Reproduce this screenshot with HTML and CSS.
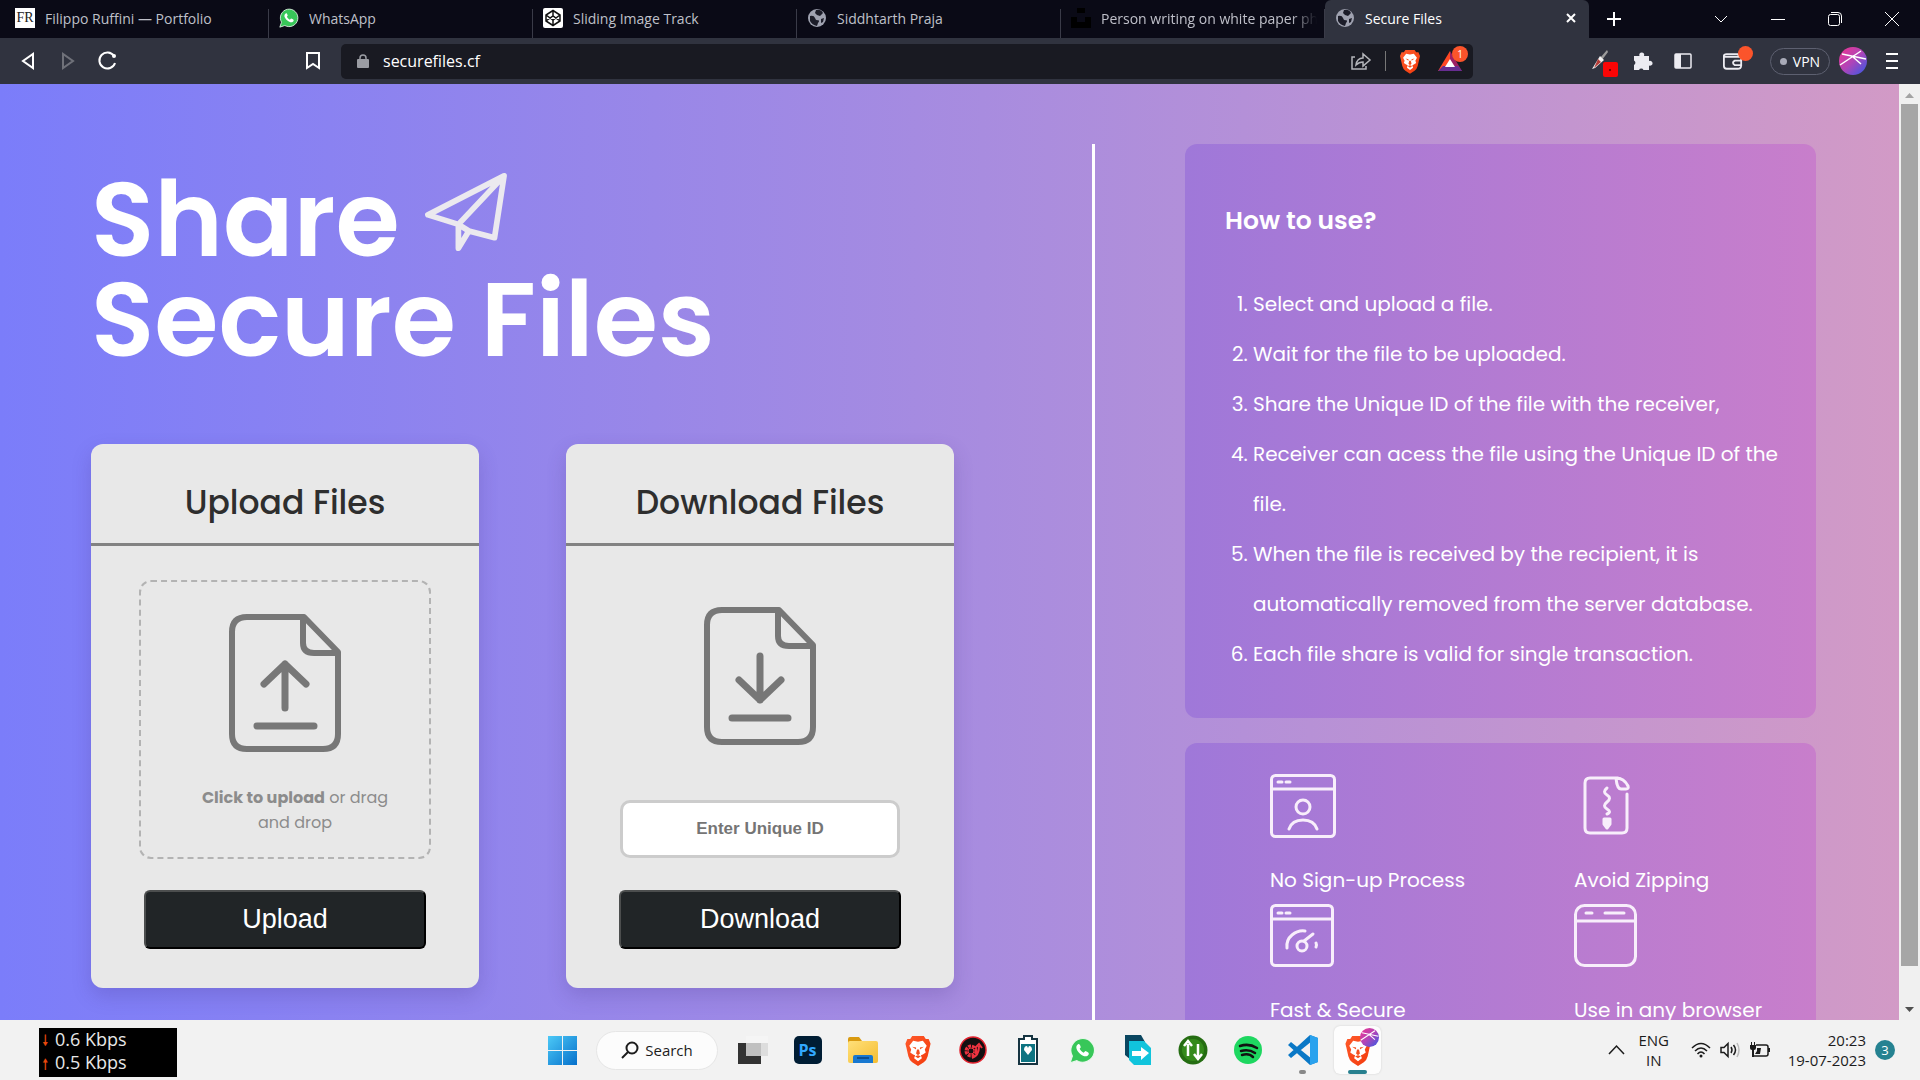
FILE: index.html
```html
<!DOCTYPE html>
<html lang="en">
<head>
<meta charset="utf-8">
<title>Secure Files</title>
<link rel="stylesheet" href="styles.css">
</head>
<body>
<svg class="defs" width="0" height="0" aria-hidden="true">
  <defs>
    <linearGradient id="orange" x1="0" y1="0" x2="1" y2="1"><stop offset="0" stop-color="#ff5a2b"/><stop offset="1" stop-color="#f23a0c"/></linearGradient>
    <linearGradient id="win" x1="0" y1="0" x2="1" y2="1"><stop offset="0" stop-color="#4cc9f7"/><stop offset="1" stop-color="#0670cb"/></linearGradient>
    <linearGradient id="fold" x1="0" y1="0" x2="1" y2="1"><stop offset="0" stop-color="#ffe07a"/><stop offset="1" stop-color="#f5bd31"/></linearGradient>
    <linearGradient id="orb" x1="0" y1="0" x2="1" y2="1"><stop offset="0" stop-color="#f0358e"/><stop offset=".5" stop-color="#b044b8"/><stop offset="1" stop-color="#2f5be8"/></linearGradient>
    <symbol id="globe" viewBox="0 0 20 20"><circle cx="10" cy="10" r="9" fill="#9fa2b0"/><path d="M3 8q4-1 5 2t3 2q2 1 0 3l-1 3q-5-1-7-5zM9 2q5-1 7 3l-3 3-3-1-2-2zM14 11l3-1-1 4-2 1z" fill="#1c1d29"/></symbol>
    <symbol id="lion" viewBox="0 0 26 32"><path d="M7 1h12l2 3 3 0 2 5-1 4-2 9q-1 4-4 6l-6 4-6-4q-3-2-4-6L1 13 0 9l2-5 3 0z" fill="url(#orange)"/><path d="M8 6l5 1 5-1 4 5-2 4 1 3-3 2-2 1 1 3-4 3-4-3 1-3-2-1-3-2 1-3-2-4z" fill="#fff"/><path d="M7 12l4 1 0 2zM19 12l-4 1 0 2zM12 15h2l1 4-2 2-2-2zM10 22l3-1 3 1-3 2z" fill="#f4501f"/></symbol>
    <symbol id="whats" viewBox="0 0 24 24"><path d="M1 23l2-6a10.500 10.500 0 1 1 4 4z" fill="#38c759" stroke="#e9f7ec" stroke-width="1"/><path d="M8 6.500c-3 2-1 6 2 8.500s6 3 7.500.5c.5-1.500-.5-2-3-3l-1.500 1.500c-2-1-3-2.500-3.500-3.500l1-1.500C9.500 6 9 6 8 6.500z" fill="#fff"/></symbol>
    <symbol id="ball" viewBox="0 0 28 28"><circle cx="14" cy="14" r="14" fill="url(#orb)"/><path d="M1 18L22 4M3 7l24 5M14 10l8 7" stroke="#fff" stroke-width="1.500" fill="none"/></symbol>
    <symbol id="file" viewBox="0 0 112 138"><g fill="none" stroke="#777" stroke-width="6" stroke-linejoin="round"><path d="M75 3H18Q3 3 3 18V120Q3 135 18 135H94Q109 135 109 120V38Z"/><path d="M74 5V29Q74 39 85 39H108"/></g></symbol>
  </defs>
</svg>

<header class="browser">
  <nav class="tabs" aria-label="Tabs">
    <a class="tab" href="#"><span class="fr">FR</span><span class="tab-title">Filippo Ruffini — Portfolio</span></a>
    <a class="tab" href="#"><svg width="20" height="20"><use href="#whats"/></svg><span class="tab-title">WhatsApp</span></a>
    <a class="tab" href="#"><svg width="20" height="20" viewBox="0 0 20 20"><rect width="20" height="20" rx="2" fill="#fff"/><path d="M10 2.500l7 4.500v6l-7 4.500L3 13V7zM3 7l7 5 7-5M3 13l7-5 7 5M10 2.500V8M10 12v5.500" fill="none" stroke="#111" stroke-width="1.500"/></svg><span class="tab-title">Sliding Image Track</span></a>
    <a class="tab" href="#"><svg width="20" height="20"><use href="#globe"/></svg><span class="tab-title">Siddhtarth Praja</span></a>
    <a class="tab" href="#"><svg width="20" height="20" viewBox="0 0 20 20"><path d="M6 0h8v5H6zM0 9h6v5h8V9h6v11H0z" fill="#000"/></svg><span class="tab-title faded">Person writing on white paper photo</span></a>
    <a class="tab active" href="#"><svg width="20" height="20"><use href="#globe"/></svg><span class="tab-title">Secure Files</span><svg width="12" height="12" viewBox="0 0 12 12"><path d="M2 2l8 8M10 2l-8 8" stroke="#fff" stroke-width="2"/></svg></a>
    <button class="new-tab" aria-label="New tab"><svg width="16" height="16" viewBox="0 0 16 16"><path d="M8 1v14M1 8h14" stroke="#fff" stroke-width="2"/></svg></button>
    <div class="window-controls">
      <button aria-label="Search tabs"><svg width="14" height="14" viewBox="0 0 14 14"><path d="M1 4l6 6 6-6"/></svg></button>
      <button aria-label="Minimize"><svg width="14" height="14" viewBox="0 0 14 14"><path d="M0 7.500h14"/></svg></button>
      <button aria-label="Restore"><svg width="14" height="14" viewBox="0 0 14 14"><rect x=".5" y="2.500" width="11" height="11" rx="2"/><path d="M3 .5h7q3.500 0 3.500 3.500v7"/></svg></button>
      <button aria-label="Close"><svg width="14" height="14" viewBox="0 0 14 14"><path d="M0 0l14 14M14 0L0 14"/></svg></button>
    </div>
  </nav>
  <div class="toolbar">
    <div class="nav-group">
      <button aria-label="Back"><svg width="18" height="18" viewBox="0 0 18 18"><path d="M14 2v14L4 9z"/></svg></button>
      <button class="dim" aria-label="Forward"><svg width="18" height="18" viewBox="0 0 18 18"><path d="M4 2v14l10-7z"/></svg></button>
      <button aria-label="Reload"><svg width="20" height="20" viewBox="0 0 20 20"><path d="M16 5a8 8 0 1 0 1 7"/><circle cx="16" cy="5" r="2" fill="#fff"/></svg></button>
      <button class="bookmark" aria-label="Bookmark"><svg width="14" height="18" viewBox="0 0 14 18"><path d="M1 1h12v15l-6-4-6 4z"/></svg></button>
    </div>
    <div class="address">
      <svg width="12" height="14" viewBox="0 0 12 14"><rect y="5" width="12" height="9" rx="1" fill="#9a9ca3"/><path d="M3 6V4a3 3 0 0 1 6 0v2" fill="none" stroke="#9a9ca3" stroke-width="1.500"/></svg>
      <input type="text" aria-label="Address" value="securefiles.cf">
      <svg width="20" height="20" viewBox="0 0 20 20" fill="none" stroke="#b4b5ba" stroke-width="1.500"><path d="M4 6H1v12h14v-3M5 14q1-7 7-7V3l7 6-7 6v-4q-4 0-7 3z"/></svg>
      <span class="bar"></span>
      <svg width="20" height="25"><use href="#lion"/></svg>
      <span class="bat"><svg width="24" height="20" viewBox="0 0 24 20"><path d="M12 0L0 20h12z" fill="#ff4724"/><path d="M12 0l12 20H12z" fill="#9e1f63"/><path d="M0 20h24l-4-5H5z" fill="#662d91"/><path d="M12 8l5 8H7z" fill="#fff"/></svg><b class="count">1</b></span>
    </div>
    <div class="ext-group">
      <button aria-label="Color picker"><svg width="22" height="28" viewBox="0 0 22 28"><path d="M15 3l-7 8 2 2 6-8z" fill="#9b9b9b"/><path d="M8 9l4 4-9 8-3 1z" fill="#f2f2f2"/><path d="M6 12l3 3-7 6z" fill="#b23b36"/><rect x="11" y="15" width="15" height="15" rx="2" fill="#fb0505"/><circle cx="18" cy="23" r="1" fill="#500"/></svg></button>
      <button aria-label="Extensions"><svg width="20" height="20" viewBox="0 0 20 20"><path d="M1 5h5.500a2.500 2.500 0 1 1 4.500 0H16v5a2.500 2.500 0 1 1 0 4.500V19h-5.500a2.500 2.500 0 0 0-4.500 0H1v-5a2.500 2.500 0 0 0 0-4.500z" fill="#ececf2"/></svg></button>
      <button aria-label="Sidebar"><svg width="18" height="16" viewBox="0 0 18 16"><rect x="1" y="1" width="16" height="14" rx="1" fill="none" stroke="#ececf2" stroke-width="1.500"/><path d="M1 1h6v14H1z" fill="#ececf2"/></svg></button>
      <button class="wallet" aria-label="Wallet"><svg width="20" height="17" viewBox="0 0 22 18" fill="none" stroke="#ececf2" stroke-width="2"><path d="M20 8V4H4Q1 4 1 2V14q0 3 3 3h12q4 0 4-4M1 3q0-2 3-2h13v3M13 8h7v5h-7q-2-1-2-2.500T13 8z"/></svg><i class="dot"></i></button>
      <button class="vpn"><i></i>VPN</button>
      <button class="profile" aria-label="Profile"><svg width="28" height="28"><use href="#ball"/></svg></button>
      <button class="menu" aria-label="Menu"><svg width="12" height="18" viewBox="0 0 12 18"><path d="M0 2h12M0 9h12M0 16h12" stroke="#fff" stroke-width="2"/></svg></button>
    </div>
  </div>
</header>

<div class="viewport">
  <main class="page">
    <section class="share">
      <h1>Share <svg width="82" height="78" viewBox="0 0 86 82"><path d="M83 3L3 44l32 10 11 7 27 7zM35 54L83 3M35 54v25l11-18" fill="none" stroke="#ebe9ef" stroke-width="6" stroke-linejoin="round"/></svg><br>Secure Files</h1>
      <div class="cards">
        <form class="card">
          <h2>Upload Files</h2>
          <label class="drop"><svg width="112" height="138"><use href="#file"/><path d="M56 94V50M35 70l21-20 21 20M28 112h57" fill="none" stroke="#777" stroke-width="7" stroke-linecap="round" stroke-linejoin="round"/></svg>
            <input type="file" hidden><span><b>Click to upload</b> or drag and drop</span></label>
          <button type="button" class="action">Upload</button>
        </form>
        <form class="card">
          <h2>Download Files</h2>
          <div class="download"><svg width="112" height="138"><use href="#file"/><path d="M56 49v44M35 73l21 20 21-20M28 111h56" fill="none" stroke="#777" stroke-width="7" stroke-linecap="round" stroke-linejoin="round"/></svg>
            <input type="text" placeholder="Enter Unique ID" aria-label="Unique ID"></div>
          <button type="button" class="action">Download</button>
        </form>
      </div>
    </section>
    <aside class="info">
      <section class="panel howto">
        <h3>How to use?</h3>
        <ol>
          <li>Select and upload a file.</li>
          <li>Wait for the file to be uploaded.</li>
          <li>Share the Unique ID of the file with the receiver,</li>
          <li>Receiver can acess the file using the Unique ID of the file.</li>
          <li>When the file is received by the recipient, it is automatically removed from the server database.</li>
          <li>Each file share is valid for single transaction.</li>
        </ol>
      </section>
      <section class="panel features">
        <figure><svg width="67" height="64" viewBox="0 0 67 64"><rect x="1.500" y="1.500" width="63" height="61" rx="4"/><path d="M2 15h62M8 8h4M16 8h4"/><circle cx="33" cy="33" r="7"/><path d="M19 55q3-9 14-9t14 9"/></svg><figcaption>No Sign-up Process</figcaption></figure>
        <figure><svg width="67" height="64" viewBox="0 0 67 64"><path d="M53 20v34q0 5-5 5H16q-5 0-5-5V9q0-5 5-5h28M42 4q1 11 5 11h5q3 0 2-3-4-8-12-8z"/><path d="M33 14q-5 4 0 7t0 7 0 7 0 5"/><path d="M30 45h6v5l-3 4-3-4z" fill="#f8eefb"/></svg><figcaption>Avoid Zipping</figcaption></figure>
        <figure><svg width="67" height="64" viewBox="0 0 67 64"><rect x="1.500" y="1.500" width="61" height="60" rx="4"/><path d="M2 15h60M8 9h4M16 9h4M17 44q-1-8 5-13t13-4M46 39q1 2 0 4M34 37l9-7"/><circle cx="32" cy="42" r="5"/></svg><figcaption>Fast &amp; Secure</figcaption></figure>
        <figure><svg width="67" height="64" viewBox="0 0 67 64"><rect x="1.500" y="1.500" width="60" height="60" rx="9"/><path d="M2 17h59M12 9h6M31 9h19"/></svg><figcaption>Use in any browser</figcaption></figure>
      </section>
    </aside>
  </main>
  <div class="scroll">
    <svg width="9" height="6" viewBox="0 0 9 6"><path d="M0 5l4.500-5L9 5z" fill="#a3a3a3"/></svg>
    <span class="thumb"></span>
    <svg width="9" height="6" viewBox="0 0 9 6"><path d="M0 0h9L4.500 5z" fill="#505050"/></svg>
  </div>
</div>

<footer class="taskbar">
  <div class="speed"><span><i>🠗</i>0.6 Kbps</span><span><i>🠕</i>0.5 Kbps</span></div>
  <nav class="apps" aria-label="Apps">
    <button aria-label="Start"><svg width="29" height="29" viewBox="0 0 29 29"><path d="M0 0h14v14H0zM15 0h14v14H15zM0 15h14v14H0zM15 15h14v14H15z" fill="url(#win)"/></svg></button>
    <span class="search-slot"><button class="search"><svg width="18" height="18" viewBox="0 0 18 18" fill="none" stroke="#1c1c1c" stroke-width="2"><circle cx="11" cy="7" r="5.500"/><path d="M7 11l-6 6"/></svg>Search</button></span>
    <button aria-label="Task view"><svg width="30" height="30" viewBox="0 0 30 30"><rect y="8" width="23" height="21" fill="#333"/><rect x="8" y="1" width="22" height="20" fill="#d9d9d9" opacity=".85"/><rect x="8" y="1" width="22" height="7" fill="#f5f5f5"/></svg></button>
    <button aria-label="Photoshop"><span class="ps">Ps</span></button>
    <button aria-label="Explorer"><svg width="30" height="28" viewBox="0 0 30 28"><path d="M0 3q0-2 2-2h9l3 4h14v5H0z" fill="#d99a10"/><rect y="5" width="30" height="22" rx="2" fill="url(#fold)"/><path d="M5 27v-6q0-2 2-2h16q2 0 2 2v6z" fill="#1878d0"/><path d="M9 22h12" stroke="#0d4f92" stroke-width="2"/></svg></button>
    <button aria-label="Brave"><svg width="26" height="31"><use href="#lion"/></svg></button>
    <button aria-label="Performance"><svg width="28" height="28" viewBox="0 0 28 28"><circle cx="14" cy="14" r="13" fill="#141011" stroke="#e2232f" stroke-width="1.500"/><circle cx="12" cy="15" r="5" fill="none" stroke="#ef3340" stroke-width="3" stroke-dasharray="3 1"/><circle cx="12" cy="15" r="3" fill="none" stroke="#ef3340"/><path d="M13 22q7-2 7-12M16 12l4-4 3 4" fill="none" stroke="#ef3340" stroke-width="2"/></svg></button>
    <button aria-label="Battery health"><svg width="20" height="30" viewBox="0 0 20 30"><path d="M6 1h8v3h5v25H1V4h5z" fill="#fff" stroke="#163441" stroke-width="2"/><path d="M3 9h14v18H3z" fill="#0d7482"/><path d="M10 20l-4-5q0-4 3-4l1 2 1-2q3 0 3 4z" fill="#fff"/></svg></button>
    <button aria-label="WhatsApp"><svg width="27" height="27"><use href="#whats"/></svg></button>
    <button aria-label="Transfer"><svg width="30" height="30" viewBox="0 0 30 30"><path d="M2 0h16l4 7H8v18L2 20z" fill="#0a4660"/><path d="M6 6h15l7 7v17H11l-5-5z" fill="#11c4dc"/><path d="M9 16h9v-4l8 6-8 7v-4H9z" fill="#fff"/></svg></button>
    <button aria-label="Data usage"><svg width="30" height="30" viewBox="0 0 30 30"><circle cx="15" cy="15" r="14.500" fill="#256d12"/><circle cx="15" cy="15" r="11" fill="#348a1b"/><path d="M10 21V9M6 11l4-5 4 5M20 9v13M16 19l4 5 4-5" fill="none" stroke="#fff" stroke-width="2.500"/></svg></button>
    <button aria-label="Spotify"><svg width="28" height="28" viewBox="0 0 28 28"><circle cx="14" cy="14" r="14" fill="#1ed760"/><path d="M6 10q9-3 17 2M7 15q8-2 14 2M8 19q7-2 11 2" fill="none" stroke="#111" stroke-width="2.500" stroke-linecap="round"/></svg></button>
    <button class="running" aria-label="Code"><svg width="30" height="30" viewBox="0 0 30 30"><path d="M0 10l3-3 21 17V6L3 23l-3-3L22 0l8 3v24l-8 3z" fill="#0a78c6"/><path d="M22 0l8 3v24l-8 3z" fill="#2aa2ee"/></svg></button>
    <button class="current" aria-label="Brave window"><svg width="26" height="31"><use href="#lion"/></svg><svg class="avatar" width="19" height="19"><use href="#ball"/></svg></button>
  </nav>
  <div class="tray">
    <svg width="17" height="10" viewBox="0 0 17 10" fill="none" stroke="#1c1c1c" stroke-width="1.500"><path d="M1 9l7.500-8L16 9"/></svg>
    <span class="lang">ENG<br>IN</span>
    <svg width="20" height="16" viewBox="0 0 20 16" fill="none" stroke="#1c1c1c" stroke-width="1.500"><path d="M1 6q9-9 18 0M4 9q6-6 12 0M6.500 12q3.500-4 7 0"/><circle cx="10" cy="14" r="1.500" fill="#1c1c1c" stroke="none"/></svg>
    <svg width="20" height="16" viewBox="0 0 20 16" fill="none" stroke="#1c1c1c" stroke-width="1.500"><path d="M1 5.500h3l4-4v13l-4-4H1zM11 5q2 3 0 6M13.500 3q4 5 0 10"/><path d="M17 1q4 7 0 14" stroke="#bbb"/></svg>
    <svg width="22" height="16" viewBox="0 0 22 16"><path d="M7 3h10q2 0 2 2v7q0 2-2 2H5" fill="none" stroke="#1c1c1c" stroke-width="1.500"/><path d="M19 6h2v4h-2zM8 6h4l-1 6H6l2-3zM1 3h6v3q0 2-2 2v7H3V8Q1 8 1 6zM2 0h1v3H2zM5 0h1v3H5z" fill="#1c1c1c"/></svg>
    <span class="clock">20:23<br>19-07-2023</span>
    <span class="notice">3</span>
  </div>
</footer>
</body>
</html>
```

FILE: styles.css
```css
* { box-sizing: border-box; }

body {
  margin: 0;
  height: 100vh;
  display: flex;
  flex-direction: column;
  overflow: hidden;
  font-family: Poppins, Inter, sans-serif;
  color: #fff;
}

button { border: 0; padding: 0; background: none; color: inherit; font: inherit; }
svg { flex: none; overflow: visible; }
i { font-style: normal; }
.defs { position: absolute; }

/* Browser frame */
.browser { flex: none; font-family: "Segoe UI", "Open Sans", sans-serif; font-size: 14px; }
.tabs { display: flex; height: 38px; padding-left: 5px; background: #0a0a16; }
.tab {
  flex: 0 1 264px;
  min-width: 0;
  display: flex;
  align-items: center;
  gap: 10px;
  padding: 0 12px 2px 10px;
  color: #bfc0c9;
  text-decoration: none;
  white-space: nowrap;
  background: linear-gradient(#3a3b48, #3a3b48) right bottom / 1px 29px no-repeat;
}
.tab-title { flex: 1; overflow: hidden; }
.faded { margin-right: -4px; mask-image: linear-gradient(90deg, #000 88%, transparent); }
.active { background: #30333f; color: #fff; border-radius: 6px 6px 0 0; }
.fr { width: 20px; height: 20px; background: #fff; color: #222; font: 14px/20px "Liberation Serif", serif; text-align: center; }
.new-tab { width: 50px; display: grid; place-items: center; }
.window-controls { margin-left: auto; display: flex; }
.window-controls button { width: 57px; display: grid; place-items: center; }
.window-controls path, .window-controls rect { fill: none; stroke: #fff; }

.toolbar { display: flex; align-items: center; height: 46px; background: #30333f; }
.nav-group { width: 341px; display: flex; padding: 0 14px 0 8px; }
.nav-group button { width: 40px; display: grid; place-items: center; }
.nav-group path { fill: none; stroke: #fff; stroke-width: 2; }
.nav-group .dim { opacity: .3; }
.nav-group .bookmark { width: 28px; margin-left: auto; }
.address {
  flex: 1;
  display: flex;
  align-items: center;
  height: 35px;
  gap: 14px;
  padding: 0 5px 0 16px;
  border-radius: 5px;
  background: #191a22;
}
.address input { flex: 1; min-width: 0; padding: 0 0 1px; border: 0; background: none; color: #fff; font: 16px "Segoe UI", "Open Sans", sans-serif; }
.bar { width: 1px; height: 20px; background: #777; }
.bat { position: relative; width: 34px; padding-left: 4px; display: flex; }
.count { position: absolute; right: 0; top: -5px; width: 16px; height: 16px; border-radius: 8px; background: #fb542b; font: 10px/16px "Open Sans", sans-serif; text-align: center; }
.ext-group { width: 447px; display: flex; align-items: center; justify-content: flex-end; padding-right: 10px; }
.ext-group button { width: 40px; display: grid; place-items: center; }
.ext-group .wallet { position: relative; margin: 0 17px 0 10px; }
.dot { position: absolute; right: 0; top: -7px; width: 15px; height: 15px; border-radius: 50%; background: #fb542b; }
.ext-group .vpn { display: flex; align-items: center; justify-content: center; gap: 6px; width: 60px; height: 27px; border: 1px solid #5d6070; border-radius: 14px; }
.vpn i { width: 7px; height: 7px; border-radius: 50%; background: #a9abb8; }
.ext-group .profile { width: 28px; margin: 0 7px 0 9px; }
.ext-group .menu { width: 36px; }

/* Web page */
.viewport { flex: 1; min-height: 0; display: flex; overflow: hidden; }
.page {
  flex: 1;
  display: grid;
  grid-template-columns: minmax(0, 1004fr) minmax(0, 631fr);
  gap: 90px;
  padding: 60px 83px 0 91px;
  background: linear-gradient(90deg, #7b7dfa, #d29ac6);
}
.share { border-right: 3px solid #fff; padding-top: 26px; }
h1 { margin: 0; font-size: 104px; line-height: 100px; font-weight: 600; }
h1 svg { vertical-align: 5px; }
.cards { display: flex; gap: 87px; margin-top: 74px; }
.card {
  flex: 0 1 388px;
  display: flex;
  flex-direction: column;
  align-items: center;
  height: 544px;
  border-radius: 12px;
  background: #e8e8e8;
  box-shadow: 0 8px 20px rgba(60, 40, 120, .2);
}
h2 { width: 100%; margin: 0; padding-top: 19px; border-bottom: 3px solid #828282; color: #2e2e2e; font-size: 33px; line-height: 80px; font-weight: 500; text-align: center; }
.drop {
  display: flex;
  flex-direction: column;
  align-items: center;
  gap: 33px;
  width: 292px;
  height: 279px;
  margin-top: 34px;
  padding-top: 32px;
  border: 2px dashed #b3b3b3;
  border-radius: 12px;
  color: #8c8c8c;
  font-size: 16px;
  line-height: 25px;
  text-align: center;
}
.drop span { width: 200px; margin-left: 20px; }
.drop b { font-weight: 700; }
.download { display: flex; flex-direction: column; gap: 55px; align-items: center; height: 313px; padding-top: 61px; }
.download input {
  width: 280px;
  height: 58px;
  border: 3px solid #ccc;
  border-radius: 10px;
  background: #fff;
  font: bold 17px "Liberation Sans", Arial, sans-serif;
  text-align: center;
}
.download input::placeholder { color: #757575; }
.card .action {
  width: 282px;
  height: 59px;
  margin-top: 31px;
  border: 2px outset #000;
  border-color: #4c4e4e #000 #000 #4c4e4e;
  border-radius: 6px;
  background: #212527;
  color: #fff;
  font: 27px "Liberation Sans", Arial, sans-serif;
}
.panel { border-radius: 12px; background: linear-gradient(90deg, #9f78d9, #c87ecb); }
.howto { padding: 57px 36px 39px 40px; }
h3 { margin: 0; font-size: 25px; line-height: 40px; font-weight: 600; }
ol { margin: 38px 0 0; padding-left: 28px; font-size: 20px; line-height: 50px; }
.features { display: grid; grid-template-columns: 304fr 242fr; row-gap: 2px; margin-top: 25px; padding: 31px 0 60px 85px; }
figure { margin: 0; height: 128px; display: flex; flex-direction: column; gap: 26px; font-size: 20px; line-height: 32px; white-space: nowrap; }
figure svg { fill: none; stroke: #f8eefb; stroke-width: 3; stroke-linecap: round; stroke-linejoin: round; }

.scroll { width: 21px; display: flex; flex-direction: column; align-items: center; padding: 9px 0 7px; background: #f0f0f0; }
.thumb { width: 17px; height: 862px; margin: 5px 0 auto; background: #a6a6a6; }

/* Desktop taskbar */
.taskbar {
  flex: none;
  display: grid;
  grid-template-columns: 1fr auto 1fr;
  align-items: center;
  height: 60px;
  background: #f2f2f2;
  color: #1c1c1c;
  font-family: "Segoe UI", "Open Sans", sans-serif;
}
.speed { width: 138px; height: 49px; margin: 4px 0 0 39px; padding: 0 3px; display: flex; flex-direction: column; background: #000; color: #e8e8e8; font-size: 18px; line-height: 23px; }
.speed i { display: inline-block; width: 13px; color: #e8480c; font-size: 15px; line-height: 16px; font-family: "DejaVu Sans", sans-serif; }
.apps { display: flex; align-items: center; }
.apps button { position: relative; width: 55px; height: 48px; display: grid; place-items: center; }
.search-slot { width: 135px; padding-left: 6px; }
.apps .search { display: flex; align-items: center; justify-content: center; gap: 6px; width: 122px; height: 39px; border: 1px solid #e6e6e6; border-radius: 20px; background: #fcfcfc; font-size: 15px; }
.ps { width: 28px; height: 28px; border-radius: 5px; background: #001d34; color: #31a8ff; font: bold 16px/28px "Open Sans", sans-serif; }
.running::after, .current::after { content: ""; position: absolute; left: 24px; bottom: 0; width: 7px; height: 4px; border-radius: 2px; background: #888; }
.apps .current { width: 47px; margin: 0 4px; border-radius: 6px; background: #fdfdfd; box-shadow: 0 0 2px #ccc; }
.current::after { left: 14px; width: 19px; background: #28808f; }
.avatar { position: absolute; right: 2px; top: 2px; }
.tray { display: flex; align-items: center; justify-content: flex-end; gap: 9px; padding-right: 25px; font-size: 15px; line-height: 20px; text-align: right; }
.tray .lang { width: 44px; margin: 0 6px 0 -2px; text-align: center; }
.tray .clock { margin-left: 8px; }
.notice { width: 20px; height: 20px; border-radius: 50%; background: #258291; color: #fff; font-size: 13px; text-align: center; }
```
